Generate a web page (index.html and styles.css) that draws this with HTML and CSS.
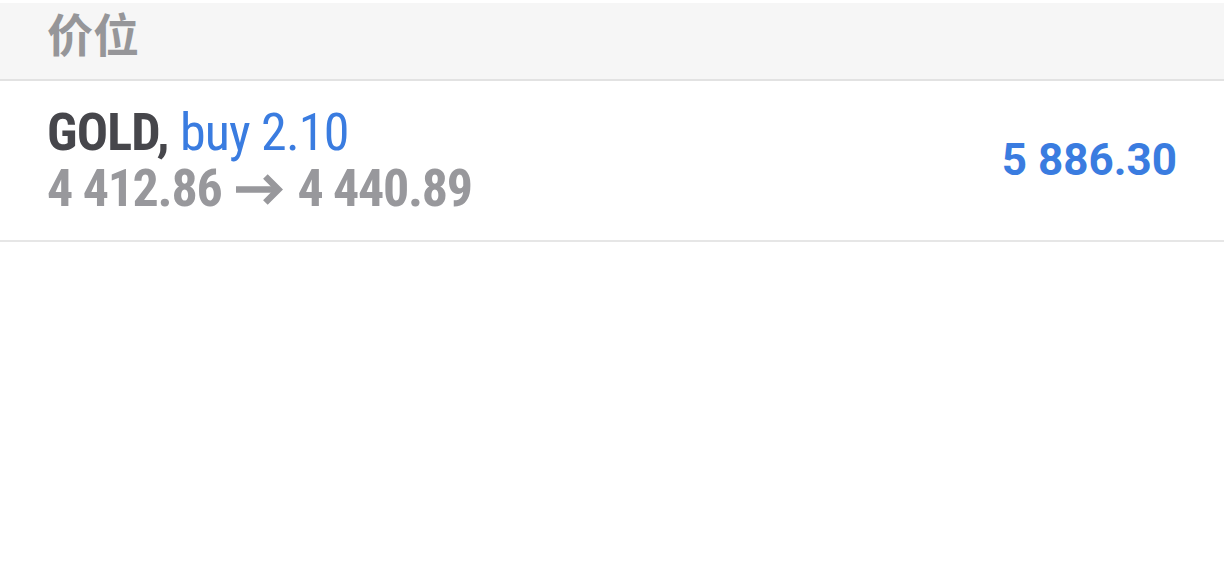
FILE: index.html
```html
<!DOCTYPE html>
<html lang="zh">
<head>
<meta charset="utf-8">
<title>价位</title>
<link rel="stylesheet" href="styles.css">
</head>
<body>
<div class="page">
  <div class="section-header">
    <span class="section-title">价位</span>
  </div>
  <div class="position-row">
    <div class="position-info">
      <div class="line-main"><span class="symbol">GOLD,</span> <span class="deal">buy 2.10</span></div>
      <div class="line-prices"><span>4 412.86</span><svg class="arrow" width="47" height="31" viewBox="0 0 47 31" aria-label="→"><rect x="0" y="12.25" width="40" height="6.5"/><polygon points="47,15.5 31.7,0.2 27.1,4.8 37.8,15.5 27.1,26.2 31.7,30.8"/></svg><span>4 440.89</span></div>
    </div>
    <div class="profit">5 886.30</div>
  </div>
</div>
</body>
</html>
```

FILE: styles.css
```css
html, body {
  margin: 0;
  padding: 0;
  background: #ffffff;
}

.page {
  padding-top: 3px;
  font-family: Roboto, "Noto Sans", sans-serif;
}

.section-header {
  height: 78px;
  box-sizing: border-box;
  background: #f6f6f6;
  border-bottom: 2px solid #e2e2e2;
  padding: 6px 47px 0;
}

.section-title {
  font-family: "Noto Sans CJK SC", sans-serif;
  font-weight: 700;
  font-size: 46px;
  line-height: 46px;
  color: #969699;
}

.position-row {
  display: flex;
  align-items: center;
  justify-content: space-between;
  padding: 24px 47px 23px;
  border-bottom: 2px solid #e6e6e6;
}

.position-info {
  display: flex;
  flex-direction: column;
}

.line-main, .line-prices {
  font-size: 52px;
  line-height: 56px;
  font-stretch: condensed;
  white-space: nowrap;
}

.line-main {
  letter-spacing: -0.8px;
}

.symbol {
  font-weight: 700;
  color: #46464b;
}

.deal {
  font-weight: 400;
  color: #3a7ce0;
}

.line-prices {
  font-weight: 700;
  letter-spacing: -1.3px;
  color: #98989c;
}

.arrow {
  fill: #98989c;
  margin: 0 14px 0 15px;
  vertical-align: 1px;
}

.profit {
  font-size: 44px;
  font-weight: 700;
  color: #3a7ce0;
  white-space: nowrap;
  margin-top: -3px;
}
```
